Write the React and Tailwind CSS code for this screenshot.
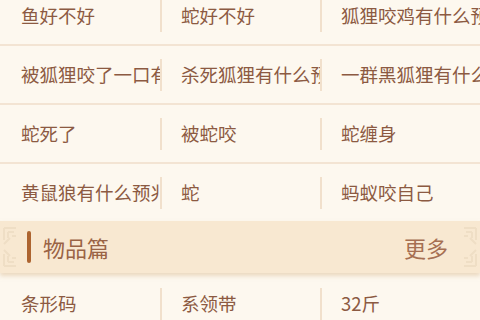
import React from 'react';

const rows = [
  ['鱼好不好', '蛇好不好', '狐狸咬鸡有什么预兆'],
  ['被狐狸咬了一口有什么预兆', '杀死狐狸有什么预兆', '一群黑狐狸有什么预兆'],
  ['蛇死了', '被蛇咬', '蛇缠身'],
  ['黄鼠狼有什么预兆', '蛇', '蚂蚁咬自己'],
];

const itemRows = [['条形码', '系领带', '32斤']];

const font = { fontFamily: '"Noto Sans CJK SC", "Noto Sans", sans-serif' };

function Row({ cells, last }) {
  return (
    <div className={`flex items-center ${last ? 'h-[57px]' : 'h-[59px] border-b-2 border-[#f3e4d3]'}`}>
      {cells.map((c, i) => (
        <div key={i} className="flex h-full w-[160px] items-center overflow-hidden">
          {i > 0 && <div className="h-[32px] w-[2px] shrink-0 bg-[#f1e0cc]" />}
          <span className={`whitespace-nowrap text-[18.5px] text-[#8c5a42] ${i > 0 ? 'pl-[19px]' : 'pl-[21px]'}`}>
            {c}
          </span>
        </div>
      ))}
    </div>
  );
}

function Corner({ flip }) {
  return (
    <svg width="18" height="46" viewBox="0 0 18 46" className={flip ? 'scale-x-[-1]' : ''}>
      <g fill="none" stroke="#efdec5" strokeWidth="2">
        <path d="M2 4 H14 M2 4 V16 M6 8 H12 M6 8 V14 M10 12 H14 M2 20 L8 14" />
        <path d="M2 42 H14 M2 42 V30 M6 38 H12 M6 38 V32 M10 34 H14 M2 26 L8 32" />
      </g>
    </svg>
  );
}

export default function App() {
  return (
    <div className="h-[320px] w-[480px] overflow-hidden bg-[#fdf8ef]" style={font}>
      <div className="-mt-[13px]">
        {rows.map((r, i) => (
          <Row key={i} cells={r} last={i === rows.length - 1} />
        ))}
        <div className="flex h-[52px] items-center bg-[#f8e8d1] shadow-[0_3px_4px_rgba(220,190,150,0.5)]">
          <div className="pl-[2px]">
            <Corner />
          </div>
          <div className="ml-[7px] h-[32px] w-[4px] rounded-sm bg-[#ad6430]" />
          <span className="ml-[12px] text-[22px] text-[#9a6345]">物品篇</span>
          <span className="ml-auto mr-[12px] text-[22px] text-[#a66f52]">更多</span>
          <div className="pr-[2px]">
            <Corner flip />
          </div>
        </div>
        <div className="mt-[2px]">
          {itemRows.map((r, i) => (
            <Row key={i} cells={r} last />
          ))}
        </div>
      </div>
    </div>
  );
}
